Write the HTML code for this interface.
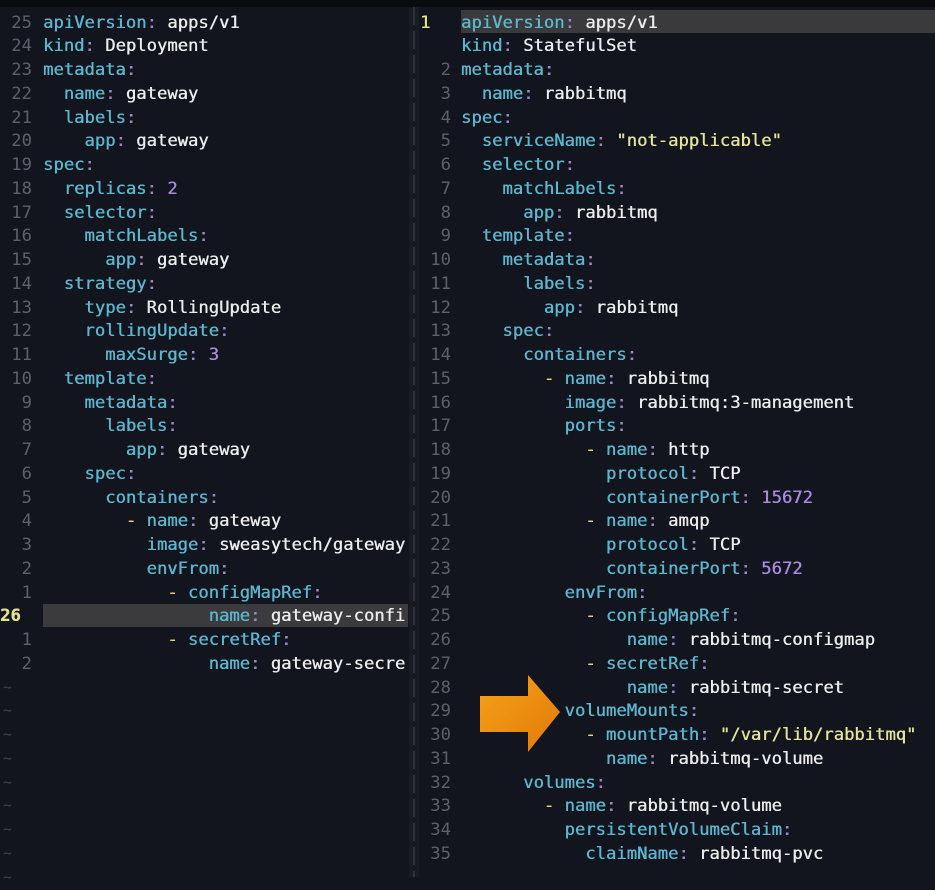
<!DOCTYPE html>
<html><head><meta charset="utf-8"><style>
html,body{margin:0;padding:0}
body{width:935px;height:877px;background:#13151e;position:relative;overflow:hidden;font-family:"DejaVu Sans Mono","Liberation Mono",monospace;font-size:17.2px;color:#ececec}
.top{position:absolute;left:0;top:0;width:935px;height:7px;background:#0a0b0f}
.r{position:absolute;height:23.75px;line-height:23.75px;white-space:pre;text-shadow:0.4px 0 0 currentColor}
.n{position:absolute;width:32px;text-align:right;color:#5c606a;white-space:pre;text-shadow:none}
.k{color:#5bb7cf}.c{color:#9d86c9}.s{color:#e3e39a}.d{color:#e8d27a}.p{color:#a88be0}
.t{position:absolute;left:3px;color:#3b3f48;font-size:14px}
.hl{position:absolute;background:#3b3b3d}
.sep{position:absolute;left:409px;top:7px;width:10px;height:870px;background:#191b24}
.sep2{position:absolute;left:413px;top:7px;width:2px;height:870px;background:repeating-linear-gradient(#2e3139 0 18px,transparent 18px 24px)}
</style></head><body>
<div class="top"></div>
<div class="sep"></div><div class="sep2"></div>
<div class="hl" style="left:43px;top:604px;width:365px;height:23px"></div>
<div class="hl" style="left:461px;top:10px;width:474px;height:23px;background:#3a3a3c"></div>
<div id="L"></div>
<svg style="position:absolute;left:0;top:0" width="935" height="877">
<defs><linearGradient id="g" x1="0" y1="0" x2="1" y2="1"><stop offset="0" stop-color="#f7a21a"/><stop offset="1" stop-color="#e07a08"/></linearGradient></defs>
<polygon points="480,696 528,696 528,675 560,712 528,752 528,732 480,732" fill="url(#g)"/>
</svg>
<script>
const L=[
["25",'<span class=k>apiVersion</span><span class=c>:</span> apps/v1'],
["24",'<span class=k>kind</span><span class=c>:</span> Deployment'],
["23",'<span class=k>metadata</span><span class=c>:</span>'],
["22",'  <span class=k>name</span><span class=c>:</span> gateway'],
["21",'  <span class=k>labels</span><span class=c>:</span>'],
["20",'    <span class=k>app</span><span class=c>:</span> gateway'],
["19",'<span class=k>spec</span><span class=c>:</span>'],
["18",'  <span class=k>replicas</span><span class=c>:</span> <span class=p>2</span>'],
["17",'  <span class=k>selector</span><span class=c>:</span>'],
["16",'    <span class=k>matchLabels</span><span class=c>:</span>'],
["15",'      <span class=k>app</span><span class=c>:</span> gateway'],
["14",'  <span class=k>strategy</span><span class=c>:</span>'],
["13",'    <span class=k>type</span><span class=c>:</span> RollingUpdate'],
["12",'    <span class=k>rollingUpdate</span><span class=c>:</span>'],
["11",'      <span class=k>maxSurge</span><span class=c>:</span> <span class=p>3</span>'],
["10",'  <span class=k>template</span><span class=c>:</span>'],
["9",'    <span class=k>metadata</span><span class=c>:</span>'],
["8",'      <span class=k>labels</span><span class=c>:</span>'],
["7",'        <span class=k>app</span><span class=c>:</span> gateway'],
["6",'    <span class=k>spec</span><span class=c>:</span>'],
["5",'      <span class=k>containers</span><span class=c>:</span>'],
["4",'        <span class=d>-</span> <span class=k>name</span><span class=c>:</span> gateway'],
["3",'          <span class=k>image</span><span class=c>:</span> sweasytech/gateway'],
["2",'          <span class=k>envFrom</span><span class=c>:</span>'],
["1",'            <span class=d>-</span> <span class=k>configMapRef</span><span class=c>:</span>'],
["26",'                <span class=k>name</span><span class=c>:</span> gateway-confi'],
["1",'            <span class=d>-</span> <span class=k>secretRef</span><span class=c>:</span>'],
["2",'                <span class=k>name</span><span class=c>:</span> gateway-secre']];
const R=[
'<span class=k>apiVersion</span><span class=c>:</span> apps/v1',
'<span class=k>kind</span><span class=c>:</span> StatefulSet',
'<span class=k>metadata</span><span class=c>:</span>',
'  <span class=k>name</span><span class=c>:</span> rabbitmq',
'<span class=k>spec</span><span class=c>:</span>',
'  <span class=k>serviceName</span><span class=c>:</span> <span class=s>"not-applicable"</span>',
'  <span class=k>selector</span><span class=c>:</span>',
'    <span class=k>matchLabels</span><span class=c>:</span>',
'      <span class=k>app</span><span class=c>:</span> rabbitmq',
'  <span class=k>template</span><span class=c>:</span>',
'    <span class=k>metadata</span><span class=c>:</span>',
'      <span class=k>labels</span><span class=c>:</span>',
'        <span class=k>app</span><span class=c>:</span> rabbitmq',
'    <span class=k>spec</span><span class=c>:</span>',
'      <span class=k>containers</span><span class=c>:</span>',
'        <span class=d>-</span> <span class=k>name</span><span class=c>:</span> rabbitmq',
'          <span class=k>image</span><span class=c>:</span> rabbitmq:3-management',
'          <span class=k>ports</span><span class=c>:</span>',
'            <span class=d>-</span> <span class=k>name</span><span class=c>:</span> http',
'              <span class=k>protocol</span><span class=c>:</span> TCP',
'              <span class=k>containerPort</span><span class=c>:</span> <span class=p>15672</span>',
'            <span class=d>-</span> <span class=k>name</span><span class=c>:</span> amqp',
'              <span class=k>protocol</span><span class=c>:</span> TCP',
'              <span class=k>containerPort</span><span class=c>:</span> <span class=p>5672</span>',
'          <span class=k>envFrom</span><span class=c>:</span>',
'            <span class=d>-</span> <span class=k>configMapRef</span><span class=c>:</span>',
'                <span class=k>name</span><span class=c>:</span> rabbitmq-configmap',
'            <span class=d>-</span> <span class=k>secretRef</span><span class=c>:</span>',
'                <span class=k>name</span><span class=c>:</span> rabbitmq-secret',
'          <span class=k>volumeMounts</span><span class=c>:</span>',
'            <span class=d>-</span> <span class=k>mountPath</span><span class=c>:</span> <span class=s>"/var/lib/rabbitmq"</span>',
'              <span class=k>name</span><span class=c>:</span> rabbitmq-volume',
'      <span class=k>volumes</span><span class=c>:</span>',
'        <span class=d>-</span> <span class=k>name</span><span class=c>:</span> rabbitmq-volume',
'          <span class=k>persistentVolumeClaim</span><span class=c>:</span>',
'            <span class=k>claimName</span><span class=c>:</span> rabbitmq-pvc'];
const H=23.75,T=11.5;let h='';
L.forEach((l,i)=>{const y=T+i*H;
 if(i==25)h+=`<div class="r" style="left:0;top:${y}px;color:#e3e38a;font-weight:bold">26</div>`;
 else h+=`<div class="r n" style="left:0;top:${y}px">${l[0]}</div>`;
 h+=`<div class="r" style="left:43px;top:${y}px">${l[1]}</div>`;});
for(let i=28;i<37;i++)h+=`<div class="r t" style="top:${T+i*H}px">~</div>`;
R.forEach((l,i)=>{const y=T+i*H;
 if(i==0)h+=`<div class="r" style="left:420px;top:${y}px;color:#e3e38a">1</div>`;
 else if(i>1)h+=`<div class="r n" style="left:419px;top:${y}px">${i}</div>`;
 h+=`<div class="r" style="left:461px;top:${y}px">${l}</div>`;});
document.getElementById('L').innerHTML=h;
</script>
</body></html>
